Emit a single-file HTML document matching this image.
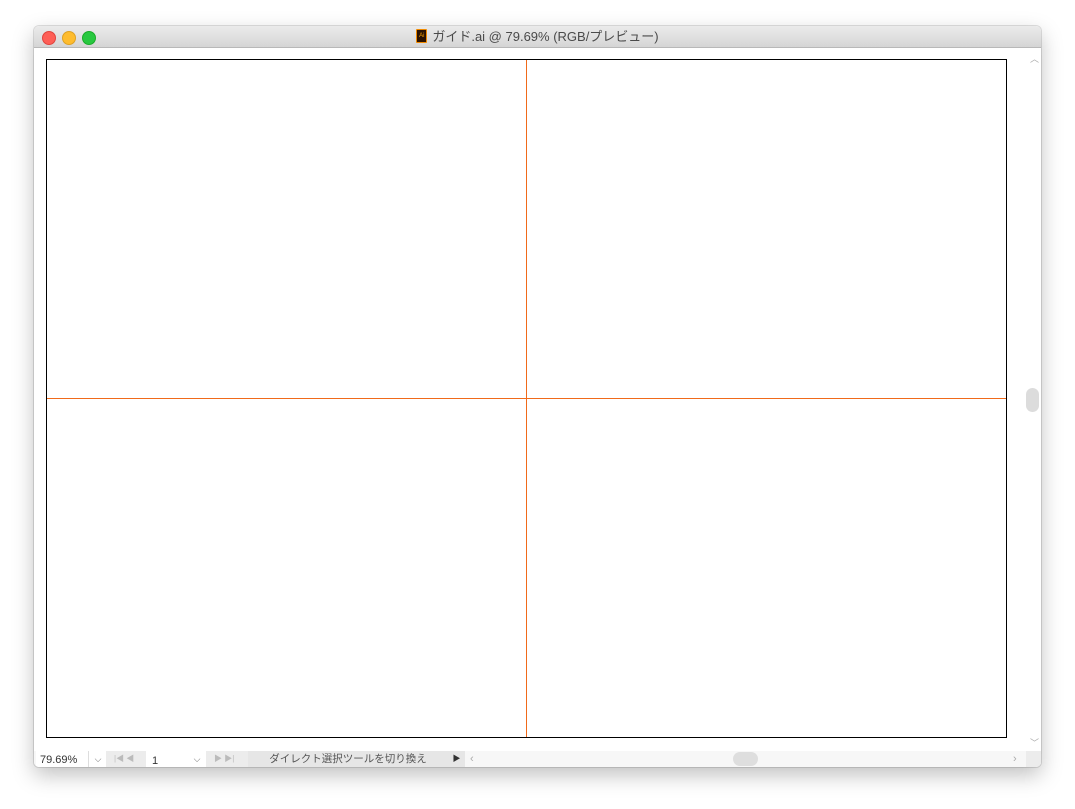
<!DOCTYPE html>
<html><head><meta charset="utf-8"><style>
body{margin:0;width:1075px;height:809px;background:#fff;position:relative;overflow:hidden;font-family:"Liberation Sans","Noto Sans CJK JP",sans-serif}
.win{position:absolute;left:34px;top:26px;width:1007px;height:741px;background:#fff;border-radius:5px;box-shadow:0 8px 22px rgba(0,0,0,.25),0 0 0 1px rgba(0,0,0,.12);overflow:hidden}
.tb{position:absolute;left:0;top:0;width:100%;height:21px;background:linear-gradient(#ebebeb,#d5d5d5);border-bottom:1px solid #b8b8b8}
.dot{position:absolute;top:5px;width:12px;height:12px;border-radius:50%}
.title{position:absolute;left:0;right:0;top:2px;text-align:center;font-size:13px;line-height:17px;color:#4a4a4a}
.ai{display:inline-block;width:9px;height:12px;background:#2b1200;border:1px solid #f08a00;color:#f7a200;font-size:6px;line-height:12px;vertical-align:top;position:relative;top:1px;margin-right:5px;border-radius:1px}
.art{position:absolute;left:12px;top:33px;width:959px;height:677px;border:1px solid #000}
.bb{position:absolute;left:0;top:725px;height:16px;width:100%;background:#f7f7f7;font-size:11px;color:#333}
.bb div{position:absolute;top:0;height:16px}
</style></head><body>
<div class="win">
<div class="tb">
<div class="dot" style="left:8px;background:#fe5f57;border:0.5px solid #e0443e"></div>
<div class="dot" style="left:28px;background:#febc2e;border:0.5px solid #dea123"></div>
<div class="dot" style="left:48px;background:#28c840;border:0.5px solid #1aab29"></div>
<div class="title"><span class="ai">Ai</span>ガイド.ai @ 79.69% (RGB/プレビュー)</div>
</div>
<div class="art">
<div style="position:absolute;left:479px;top:0;width:1px;height:677px;background:#f06a1a"></div>
<div style="position:absolute;left:0;top:338px;width:959px;height:1px;background:#f06a1a"></div>
</div>
<div style="position:absolute;left:992px;top:362px;width:13px;height:24px;border-radius:7px;background:#dcdcdc"></div>
<div style="position:absolute;left:996px;top:26px;font-size:9px;color:#aaa">︿</div>
<div style="position:absolute;left:996px;top:710px;font-size:9px;color:#aaa">﹀</div>
<div class="bb">
<div style="left:2px;width:52px;background:#fff;padding-left:4px;line-height:19px">79.69%</div>
<div style="left:54px;width:18px;background:#fff;border-left:1px solid #ddd;color:#666;font-size:9px;text-align:center;line-height:16px">⌵</div>
<div style="left:72px;width:40px;background:#ececec;color:#bbb;font-size:8px;line-height:16px;padding-left:8px">|◀ ◀</div>
<div style="left:112px;width:42px;background:#fff;padding-left:6px;line-height:20px">1</div>
<div style="left:154px;width:18px;background:#fff;color:#666;font-size:9px;text-align:center;line-height:16px">⌵</div>
<div style="left:172px;width:42px;background:#ececec;color:#bbb;font-size:8px;line-height:16px;padding-left:8px">▶ ▶|</div>
<div style="left:214px;width:200px;background:#e6e6e6;text-align:center;line-height:17px;color:#555;font-size:10.5px">ダイレクト選択ツールを切り換え</div>
<div style="left:414px;width:17px;background:#e6e6e6;font-size:8px;line-height:16px;text-align:center">▶</div>
<div style="left:436px;color:#aaa;line-height:16px">‹</div>
<div style="left:699px;width:25px;height:14px;top:1px;border-radius:7px;background:#dedede"></div>
<div style="left:979px;color:#aaa;line-height:16px">›</div>
<div style="left:992px;width:15px;background:#ececec"></div>
</div>
</div>
</body></html>
